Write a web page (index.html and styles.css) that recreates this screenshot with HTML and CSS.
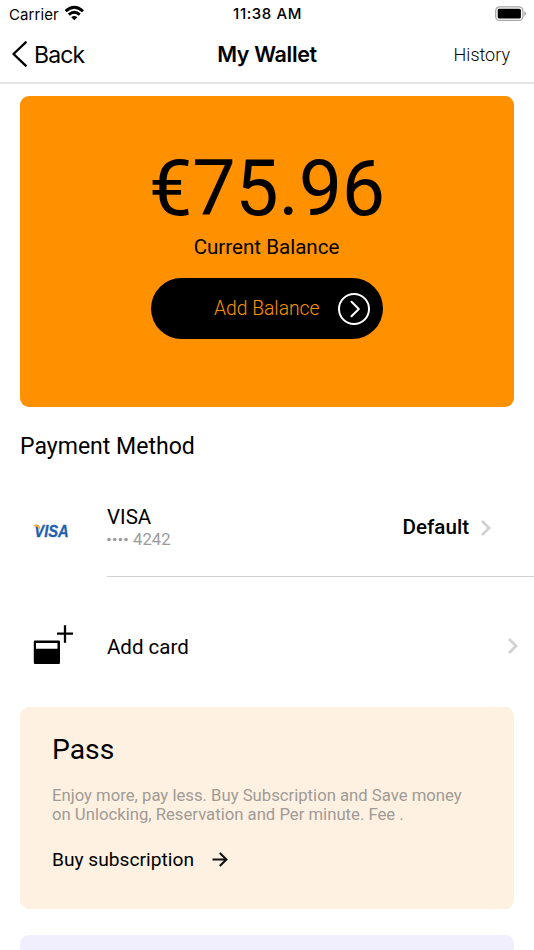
FILE: index.html
```html
<!DOCTYPE html>
<html lang="en">
<head>
<meta charset="utf-8">
<title>My Wallet</title>
<link rel="stylesheet" href="styles.css">
</head>
<body>
<header class="status">
  <div class="status-left"><span class="carrier">Carrier</span>
    <svg class="wifi" width="20" height="16" viewBox="0 0 20 16"><g fill="none" stroke="#000" stroke-width="2.900"><path d="M.6 6.200Q9.300-1.700 18 6.200"/><path d="M3.800 9.600Q9.300 5 14.800 9.600"/></g><path d="M6.200 12.200Q9.300 9.600 12.400 12.200L9.300 15.300Z"/></svg>
  </div>
  <span class="time">11:38 AM</span>
  <svg class="battery" width="32" height="16" viewBox="0 0 32 16"><rect x=".7" y=".8" width="27.200" height="13.600" rx="4" fill="none" stroke="#a6a6a6" stroke-width="1.300"/><rect x="2.700" y="2.700" width="23.200" height="9.800" rx="1.500"/><path d="M29.300 5.200Q31.200 6 31.200 7.600T29.300 10Z" fill="#a6a6a6"/></svg>
</header>
<nav class="nav">
  <a class="back"><svg width="18" height="28" viewBox="0 0 18 28"><path d="M15.700 2.300 3.500 14 15.700 25.700" fill="none" stroke="#000" stroke-width="2.400" stroke-linecap="round" stroke-linejoin="round"/></svg><span>Back</span></a>
  <h1>My Wallet</h1>
  <a class="history">History</a>
</nav>
<main>
  <section class="balance">
    <div class="amount">€75.96</div>
    <div class="caption">Current Balance</div>
    <button class="add"><span>Add Balance</span>
      <svg width="34" height="34" viewBox="0 0 34 34" fill="none" stroke="#fff" stroke-width="2"><circle cx="17" cy="17" r="15"/><path d="m14.500 9.800 7.300 7.200-7.300 7.200" stroke-linecap="round" stroke-linejoin="round"/></svg>
    </button>
  </section>
  <h2>Payment Method</h2>
  <div class="row visa">
    <svg class="visa-logo" width="42" height="20" viewBox="0 0 42 20"><text x="0.300" y="15.500" textLength="34.500" lengthAdjust="spacingAndGlyphs">VISA</text><path d="M-.8 4h4.700q1.500.1 1.700 1.500l.7 3.700Q4.200 5.800-.8 4.500Z"/></svg>
    <div class="info"><span class="name">VISA</span><span class="number"><svg width="21" height="6" viewBox="0 0 21 6" fill="#9b9b9b"><circle cx="2" cy="2.500" r="1.800"/><circle cx="7.700" cy="2.500" r="1.800"/><circle cx="13.400" cy="2.500" r="1.800"/><circle cx="19" cy="2.500" r="1.800"/></svg><span>4242</span></span></div>
    <strong>Default</strong>
    <svg class="chevron" width="12" height="18" viewBox="0 0 12 18"><path d="m2 2 7 7-7 7"/></svg>
  </div>
  <div class="row card-row">
    <svg class="card-icon" width="42" height="42" viewBox="0 0 42 42"><path fill-rule="evenodd" d="M2 15.500h23.800q1.200 0 1.200 1.200v21q0 1.200-1.200 1.200H2Q.8 38.900.8 37.700v-21q0-1.200 1.200-1.200ZM3 18v5.700h21.500V18Z"/><path d="M32 .3v17.500M24 8.700h16" stroke="#000" stroke-width="2.300"/></svg>
    <span class="name">Add card</span>
    <svg class="chevron" width="12" height="18" viewBox="0 0 12 18"><path d="m2 2 7 7-7 7"/></svg>
  </div>
  <section class="pass">
    <h3>Pass</h3>
    <p>Enjoy more, pay less. Buy Subscription and Save money<br>on Unlocking, Reservation and Per minute. Fee .</p>
    <a class="buy"><span>Buy subscription</span><svg width="16" height="16" viewBox="0 0 16 16" fill="none" stroke="#111" stroke-width="2.100"><path d="M.5 7.500h14M7.800.900 14.400 7.500l-6.600 6.600"/></svg></a>
  </section>
  <section class="next"></section>
</main>
</body>
</html>
```

FILE: styles.css
```css
* { box-sizing: border-box; }
body { margin: 0; height: 950px; overflow: hidden; display: flex; flex-direction: column; background: #fff; color: #000; font-family: Roboto, "Liberation Sans", sans-serif; }
h1, h2, h3, p { margin: 0; font-weight: 400; }
svg { display: block; flex: none; }
span, h1, h2, strong { white-space: nowrap; }
.status { flex: none; height: 28px; padding: 0 7px 0 9px; display: grid; grid-template-columns: 1fr auto 1fr; align-items: center; font-family: Inter, sans-serif; }
.status-left { display: flex; align-items: center; gap: 6px; }
.carrier { font-size: 15px; letter-spacing: .1px; }
.wifi { margin-top: -3px; }
.time { font-size: 15px; font-weight: 500; letter-spacing: .58px; margin: -2px 1px 0 0; }
.battery { justify-self: end; margin-top: -1px; }
.nav { flex: none; height: 56px; padding: 0 24px 2px 10px; display: grid; grid-template-columns: 1fr auto 1fr; align-items: center; border-bottom: 2px solid #e5e5e5; }
.back { display: flex; align-items: center; gap: 6px; font: 23px Inter, sans-serif; letter-spacing: -.85px; }
.back span { padding-top: 1px; }
h1 { margin-left: 14px; font: 600 21.500px Inter, sans-serif; letter-spacing: -.35px; }
.history { justify-self: end; font-size: 18px; font-weight: 300; }
main { flex: 1; min-height: 0; overflow: hidden; padding: 12px 20px 0; display: flex; flex-direction: column; }
main > * { flex: none; }
.balance { height: 310.500px; padding-top: 54px; border-radius: 9px; background: #ff9100; display: flex; flex-direction: column; align-items: center; }
.amount { font-size: 77.200px; line-height: 78px; letter-spacing: -.2px; }
.caption { margin-top: 5px; margin-right: 1px; font-size: 20.550px; line-height: 28px; }
.add { margin: 17px 0 0; width: 232px; height: 61px; padding: 0 12px 0 0; border: 0; border-radius: 31px; background: #000; color: #ff9100; display: flex; align-items: center; justify-content: flex-end; gap: 17.500px; font: 300 19.300px Roboto, sans-serif; }
h2 { margin-top: 25.500px; font-size: 23.050px; line-height: 30px; }
.row { display: flex; align-items: center; margin-right: -20px; }
.visa { height: 100px; margin: 14.500px -20px 0 87px; border-bottom: 1.500px solid #d2d2d2; padding-right: 42px; }
.visa-logo { margin: 9px 31px 0 -73px; overflow: visible; }
.visa-logo text { font: italic 700 16px "Liberation Sans", sans-serif; fill: #1f5fae; stroke: #1f5fae; stroke-width: .3px; }
.visa-logo path { fill: #f3a127; }
.info { display: flex; flex-direction: column; flex: 1; padding-top: 3px; }
.name { font-size: 20.500px; line-height: 24px; }
.number { display: flex; align-items: center; gap: 5px; font-size: 16.700px; line-height: 21px; color: #9b9b9b; }
strong { font-size: 20.600px; font-weight: 500; margin-right: 11px; padding-top: 2px; }
.visa .chevron { margin-top: 3px; }
.chevron path { fill: none; stroke: #d1d1d1; stroke-width: 2.800; }
.card-row { height: 130px; padding: 8px 15px 0 13px; }
.card-icon { margin-right: 32px; }
.card-row .name { flex: 1; padding-top: 2px; }
.pass { height: 202px; padding: 26px 32px 0; border-radius: 9px; background: #fef1e1; }
h3 { font-size: 28.300px; line-height: 34px; }
p { margin-top: 19px; font-size: 16.720px; line-height: 19.300px; color: #9f9b96; white-space: nowrap; }
.buy { margin-top: 24px; display: flex; align-items: center; gap: 18px; font-size: 19.200px; line-height: 24px; }
.next { height: 202px; margin-top: 26px; border-radius: 9px; background: #f1effd; }
```
